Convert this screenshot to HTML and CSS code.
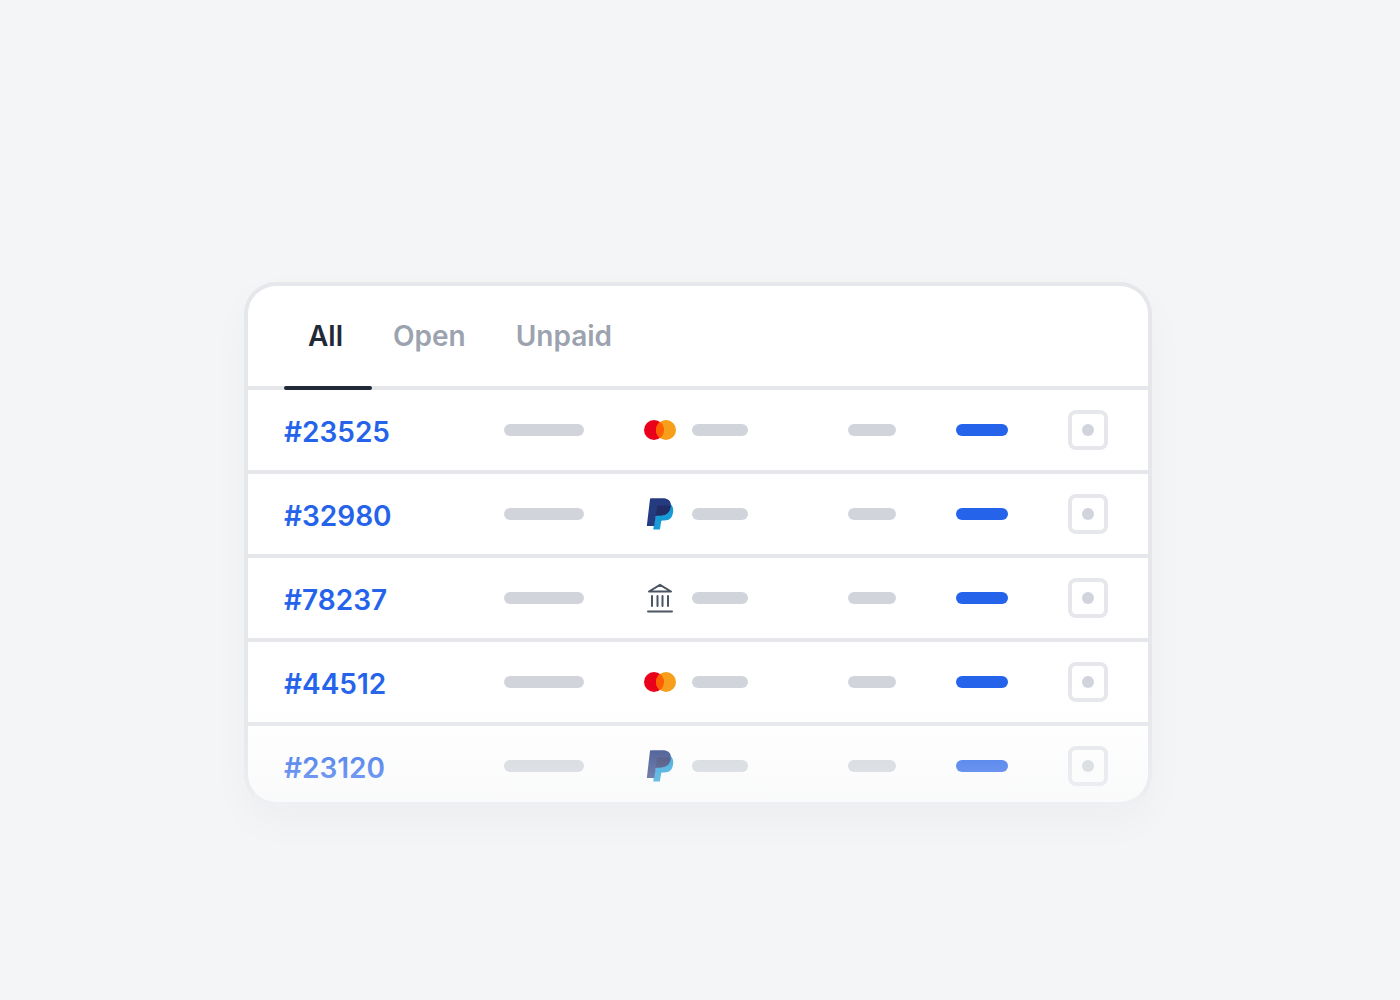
FILE: index.html
```html
<!DOCTYPE html>
<html lang="en">
<head>
<meta charset="utf-8">
<meta name="viewport" content="width=device-width, initial-scale=1">
<title>Orders</title>
<link rel="stylesheet" href="styles.css">
</head>
<body>
<svg width="0" height="0" class="sprite" aria-hidden="true">
  <symbol id="mastercard" viewBox="0 0 32 32">
    <circle cx="10" cy="16" r="10" fill="#eb001b"/>
    <circle cx="22" cy="16" r="10" fill="#f79e1b"/>
    <path d="M16 8a10 10 0 0 1 0 16a10 10 0 0 1 0-16z" fill="#ff5f00"/>
  </symbol>
  <symbol id="paypal" viewBox="0 0 32 32">
    <path d="M26.600 6C28.800 8 29.600 11 29.100 14.200C28.200 20 25.300 22.400 20.400 22.400H18.300C17.700 22.400 17.300 22.700 17.200 23.300L15.900 31.600H9.200L11 20.200L14 9z" fill="#179bd7"/>
    <path d="M6.800 0.300H18.500C24.500 0.300 27.500 3.300 26.700 8.500C25.800 14.600 22.300 17.400 16.300 17.400H13C12.200 17.400 11.700 17.900 11.600 18.700L10.200 28H3.500C3 28 2.800 27.700 2.900 27.200L6 1C6.100 0.600 6.400 0.300 6.800 0.300z" fill="#253b80"/>
    <path d="M26.700 8.500C25.800 14.600 22.300 17.400 16.300 17.400H13C12.200 17.400 11.800 17.700 11.700 18L13.200 8.500C13.300 7.900 13.700 7.500 14.300 7.500H22C24 7.500 25.500 7.700 26.700 8.500z" fill="#222d65"/>
  </symbol>
  <symbol id="bank" viewBox="0 0 32 32">
    <path d="M5 9.500L16 2.800L27 9.500ZM8 14v10M13.500 14v10M18.500 14v10M24 14v10M4 29.500h24" fill="none" stroke="#4b5563" stroke-width="2" stroke-linecap="round" stroke-linejoin="round"/>
  </symbol>
</svg>
<main class="page">
  <section class="card" aria-label="Orders">
    <div class="tabs" role="tablist">
      <button class="tab tab-active" role="tab" aria-selected="true">All</button>
      <button class="tab" role="tab" aria-selected="false">Open</button>
      <button class="tab" role="tab" aria-selected="false">Unpaid</button>
    </div>
    <table class="orders">
      <colgroup><col class="col-order"><col class="col-date"><col class="col-method"><col class="col-total"><col class="col-status"><col class="col-menu"></colgroup>
      <tbody>
        <tr>
          <td><a class="order" href="#23525">#23525</a></td>
          <td><span class="bar bar-date"></span></td>
          <td><div class="method"><svg class="icon" aria-label="Mastercard"><use href="#mastercard"/></svg><span class="bar bar-method"></span></div></td>
          <td><span class="bar bar-total"></span></td>
          <td><span class="bar bar-status"></span></td>
          <td><button class="menu" aria-label="Actions for order 23525"></button></td>
        </tr>
        <tr>
          <td><a class="order" href="#32980">#32980</a></td>
          <td><span class="bar bar-date"></span></td>
          <td><div class="method"><svg class="icon" aria-label="PayPal"><use href="#paypal"/></svg><span class="bar bar-method"></span></div></td>
          <td><span class="bar bar-total"></span></td>
          <td><span class="bar bar-status"></span></td>
          <td><button class="menu" aria-label="Actions for order 32980"></button></td>
        </tr>
        <tr>
          <td><a class="order" href="#78237">#78237</a></td>
          <td><span class="bar bar-date"></span></td>
          <td><div class="method"><svg class="icon" aria-label="Bank transfer"><use href="#bank"/></svg><span class="bar bar-method"></span></div></td>
          <td><span class="bar bar-total"></span></td>
          <td><span class="bar bar-status"></span></td>
          <td><button class="menu" aria-label="Actions for order 78237"></button></td>
        </tr>
        <tr>
          <td><a class="order" href="#44512">#44512</a></td>
          <td><span class="bar bar-date"></span></td>
          <td><div class="method"><svg class="icon" aria-label="Mastercard"><use href="#mastercard"/></svg><span class="bar bar-method"></span></div></td>
          <td><span class="bar bar-total"></span></td>
          <td><span class="bar bar-status"></span></td>
          <td><button class="menu" aria-label="Actions for order 44512"></button></td>
        </tr>
        <tr>
          <td><a class="order" href="#23120">#23120</a></td>
          <td><span class="bar bar-date"></span></td>
          <td><div class="method"><svg class="icon" aria-label="PayPal"><use href="#paypal"/></svg><span class="bar bar-method"></span></div></td>
          <td><span class="bar bar-total"></span></td>
          <td><span class="bar bar-status"></span></td>
          <td><button class="menu" aria-label="Actions for order 23120"></button></td>
        </tr>
      </tbody>
    </table>
  </section>
</main>
</body>
</html>
```
FILE: styles.css
```css
* {
  box-sizing: border-box;
}

body {
  margin: 0;
  background: #f4f5f7;
  font-family: Inter, "Liberation Sans", sans-serif;
  font-size: 28px;
  font-weight: 600;
  line-height: 32px;
}

.sprite {
  position: absolute;
}

.page {
  display: flex;
  align-items: center;
  justify-content: center;
  min-height: 100vh;
  padding: 88px 4px 0 0;
}

.card {
  position: relative;
  width: 100%;
  max-width: 908px;
  border: 4px solid #e5e7eb;
  border-bottom-color: #e9ebef;
  border-radius: 32px;
  background: #fff;
  box-shadow: 0 16px 40px rgba(17, 24, 39, 0.03);
}

/* Fades the end of the list into the page */
.card::after {
  content: "";
  position: absolute;
  inset: auto -4px -4px;
  height: 120px;
  border-radius: 0 0 32px 32px;
  background: linear-gradient(rgba(244, 245, 247, 0), rgba(244, 245, 247, 0.1) 32%, rgba(244, 245, 247, 0.5));
  pointer-events: none;
}

.tabs {
  display: flex;
  gap: 2px;
  height: 104px;
  padding: 0 36px;
  border-bottom: 4px solid #e5e7eb;
}

.tab {
  position: relative;
  padding: 0 24px;
  border: 0;
  background: none;
  color: #9ca3af;
  font: inherit;
}

.tab-active {
  color: #1f2937;
}

.tab-active::after {
  content: "";
  position: absolute;
  left: 0;
  bottom: -4px;
  width: 88px;
  height: 4px;
  border-radius: 2px;
  background: #1f2937;
}

.orders {
  width: 100%;
  table-layout: fixed;
  border-collapse: separate;
  border-spacing: 0;
}

.col-order { width: 256px; }
.col-date { width: 140px; }
.col-method { width: 204px; }
.col-total { width: 108px; }
.col-status { width: 112px; }
.col-menu { width: 80px; }

.orders td {
  height: 84px;
  padding: 0;
  border-bottom: 4px solid #e5e7eb;
  vertical-align: middle;
}

.orders tr:last-child td {
  height: 76px;
  padding-top: 4px;
  border-bottom: 0;
}

.order {
  display: block;
  padding: 4px 0 0 36px;
  color: #2563eb;
  text-decoration: none;
}

.method {
  display: flex;
  align-items: center;
  gap: 16px;
}

.icon {
  width: 32px;
  height: 32px;
}

.bar {
  display: block;
  height: 12px;
  border-radius: 6px;
  background: #d1d5db;
}

.bar-date { width: 80px; }
.bar-method { width: 56px; }
.bar-total { width: 48px; }

.bar-status {
  width: 52px;
  background: #2563eb;
}

.menu {
  display: grid;
  place-items: center;
  width: 40px;
  height: 40px;
  padding: 0;
  border: 4px solid #e5e7eb;
  border-radius: 8px;
  background: #fff;
}

.menu::before {
  content: "";
  width: 12px;
  height: 12px;
  border-radius: 50%;
  background: #d1d5db;
}
```
